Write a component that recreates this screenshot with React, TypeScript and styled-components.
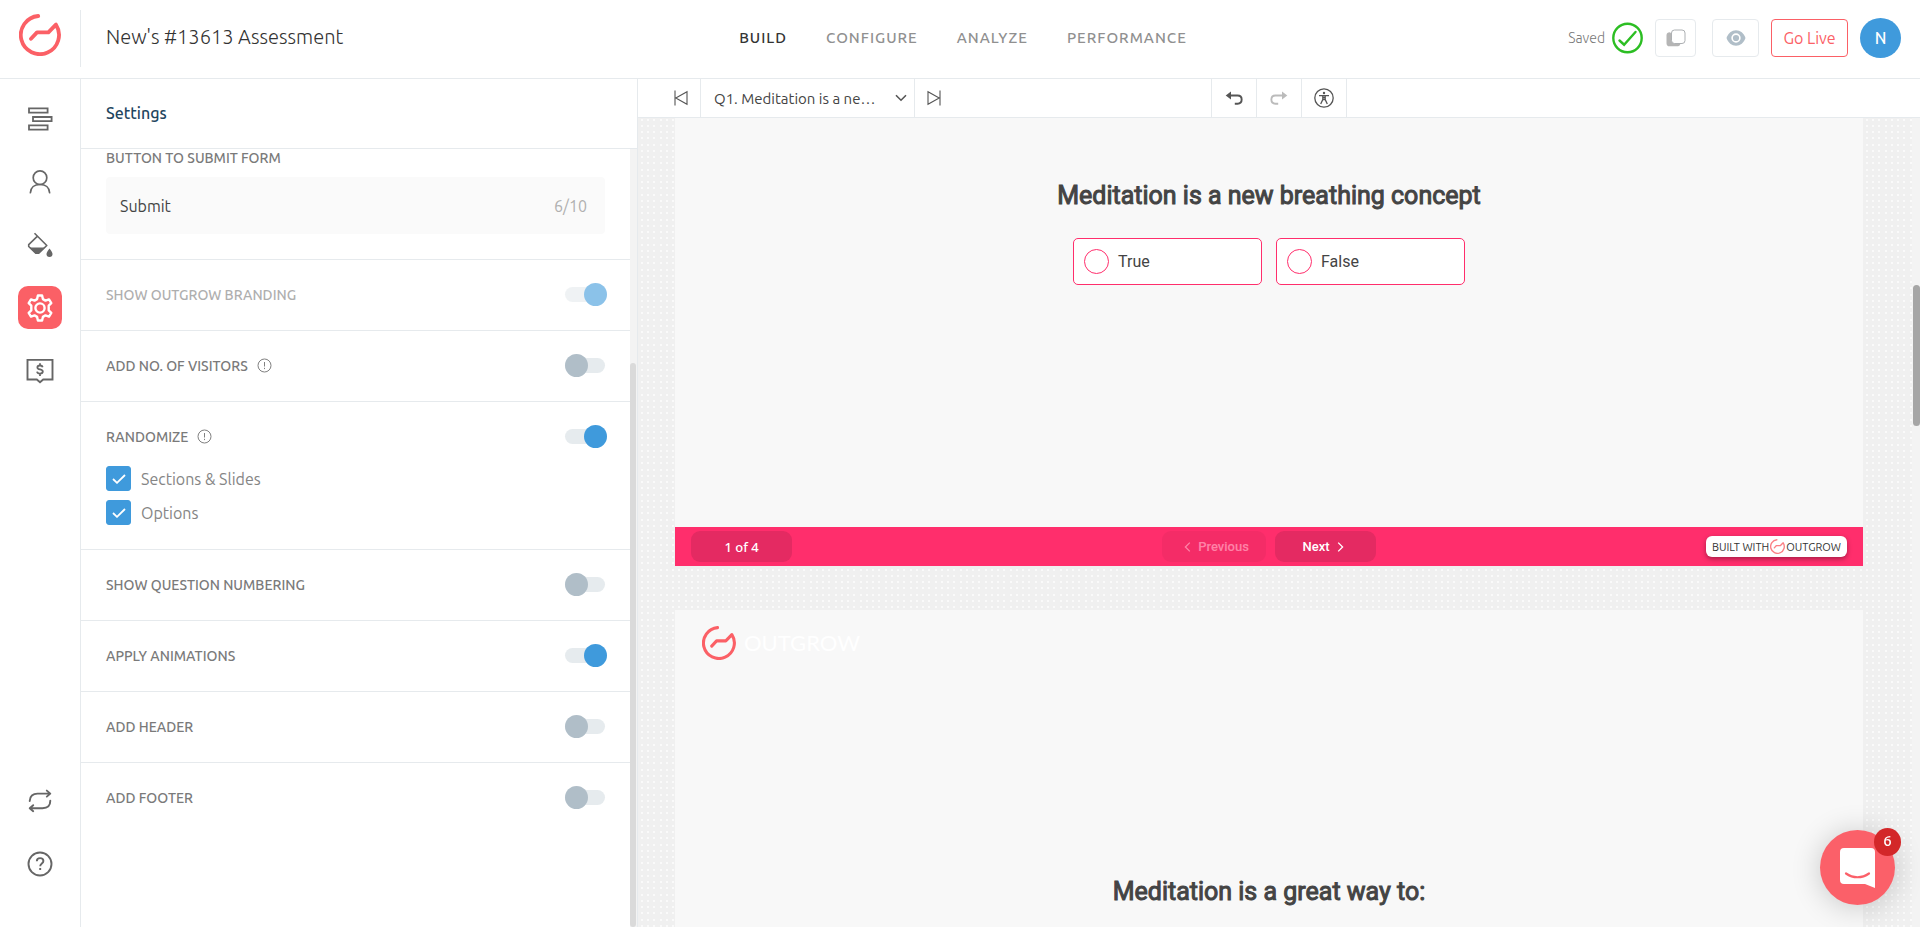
import React, { useState } from "react";
import styled, { createGlobalStyle, css } from "styled-components";

const line = "#e6eaed";
const ink = "#666666";
const blue = "#3f9adc";
const coral = "#fb6066";
const pink = "#ff2e6c";
const uiFont = '"Ubuntu", "Open Sans", "Noto Sans", sans-serif';
const quizFont = '"Roboto", sans-serif';

const dotTile = `<svg xmlns='http://www.w3.org/2000/svg' width='25' height='25'>${[4, 10, 16, 23]
  .map((x) => [2, 8, 14, 20].map((y) => `<circle cx='${x}' cy='${y}' r='0.9' fill='white'/>`).join(""))
  .join("")}</svg>`;

const GlobalStyle = createGlobalStyle`
  * { box-sizing: border-box; }
  body { margin: 0; font-family: ${uiFont}; color: #444; background: #fff; overflow: hidden; }
  button, input, select { font: inherit; color: inherit; margin: 0; }
  button { cursor: pointer; padding: 0; }
  a { text-decoration: none; color: inherit; }
  h1, h2, h3 { margin: 0; }
  svg { display: block; flex: none; }
`;

const Page = styled.div`
  display: flex;
  flex-direction: column;
  height: 100vh;
`;

const Header = styled.header`
  display: grid;
  grid-template-columns: 1fr auto 1fr;
  flex: none;
  height: 79px;
  border-bottom: 1px solid ${line};
`;

const Brand = styled.div`
  display: flex;
  align-items: center;
  padding-bottom: 2px;
`;

const LogoLink = styled.a`
  display: flex;
  justify-content: center;
  width: 80px;
  padding-bottom: 6px;
`;

const Title = styled.h1`
  display: flex;
  align-items: center;
  height: 57px;
  padding: 0 0 2px 25px;
  border-left: 1px solid ${line};
  font-size: 20px;
  font-weight: 300;
  line-height: 24px;
  color: #333;
`;

const Nav = styled.nav`
  display: flex;
  align-items: center;
  gap: 39px;
  padding: 0 0 2px 6px;
`;

const NavLink = styled.a<{ $active?: boolean }>`
  font-size: 15px;
  font-weight: 500;
  line-height: 20px;
  letter-spacing: 1px;
  color: ${(p) => (p.$active ? "#333" : "#909090")};
`;

const Actions = styled.div`
  display: flex;
  align-items: center;
  justify-content: flex-end;
  gap: 12px;
  padding: 0 19px 2px 0;
`;

const Saved = styled.span`
  display: flex;
  align-items: center;
  gap: 7px;
  font-size: 14px;
  font-weight: 300;
  color: #777;
`;

const HeaderButton = styled.button<{ $width: number; $accent?: boolean }>`
  display: flex;
  align-items: center;
  justify-content: center;
  width: ${(p) => p.$width}px;
  height: 38px;
  border: 1px solid ${(p) => (p.$accent ? coral : line)};
  border-radius: 4px;
  background: #fff;
  color: ${coral};
  font-size: 16px;
`;

const PreviewGroup = styled.div`
  display: flex;
  padding-left: 4px;
`;

const Avatar = styled.button`
  width: 41px;
  height: 40px;
  border: 0;
  border-radius: 50%;
  background: ${blue};
  color: #fff;
  font-size: 16px;
  font-weight: 500;
`;

const Body = styled.div`
  display: flex;
  flex: 1;
  min-height: 0;
`;

const Rail = styled.nav`
  display: flex;
  flex-direction: column;
  flex: none;
  align-items: center;
  gap: 20px;
  width: 81px;
  padding: 18px 0 42px;
  border-right: 1px solid ${line};
`;

const RailButton = styled.button<{ $active?: boolean }>`
  display: flex;
  align-items: center;
  justify-content: center;
  width: 44px;
  height: 43px;
  border: 0;
  border-radius: 10px;
  background: ${(p) => (p.$active ? coral : "transparent")};
  color: ${(p) => (p.$active ? "#fff" : ink)};
`;

const RailSpacer = styled.div`
  flex: 1;
`;

const Panel = styled.section`
  display: flex;
  flex-direction: column;
  flex: none;
  width: 556px;
`;

const PanelTitle = styled.h2`
  flex: none;
  height: 70px;
  padding: 22px 25px;
  border-bottom: 1px solid ${line};
  font-size: 16px;
  font-weight: 500;
  line-height: 24px;
  color: #1f4660;
`;

const PanelBody = styled.div`
  display: flex;
  flex: 1;
  min-height: 0;
  overflow: hidden;
`;

const PanelRows = styled.div`
  flex: 1;
`;

const ScrollTrack = styled.div<{ $wide?: boolean }>`
  flex: none;
  width: ${(p) => (p.$wide ? 8 : 7)}px;
  padding-left: ${(p) => (p.$wide ? 1 : 0)}px;
  padding-right: ${(p) => (p.$wide ? 0 : 1)}px;
  background: #f3f3f3;
`;

const ScrollThumb = styled.div<{ $top: number; $height: number; $color: string }>`
  position: relative;
  top: ${(p) => p.$top}%;
  height: ${(p) => p.$height}%;
  border-radius: 4px;
  background: ${(p) => p.$color};
`;

const Row = styled.div`
  padding: 23px 23px 24px 25px;
  border-bottom: 1px solid ${line};
  &:first-child { padding-top: 0; padding-bottom: 25px; }
  &:last-child { border-bottom: 0; }
`;

const RowHead = styled.div<{ $muted?: boolean }>`
  display: flex;
  align-items: center;
  gap: 9px;
  height: 23px;
  opacity: ${(p) => (p.$muted ? 0.6 : 1)};
  color: #808080;
`;

const rowText = css`
  font-size: 14px;
  font-weight: 500;
  line-height: 18px;
  color: #7a7a7a;
`;

const RowLabel = styled.label`
  ${rowText}
`;

const FieldLabel = styled.label`
  ${rowText}
  display: block;
`;

const Switch = styled.input`
  position: relative;
  appearance: none;
  width: 42px;
  height: 23px;
  margin-left: auto;
  cursor: pointer;
  &::before {
    content: "";
    position: absolute;
    left: 0;
    top: 4px;
    width: 40px;
    height: 15px;
    border-radius: 8px;
    background: #e6ebee;
  }
  &::after {
    content: "";
    position: absolute;
    left: 0;
    top: 0;
    width: 23px;
    height: 23px;
    border-radius: 50%;
    background: #b0bec8;
  }
  &:checked::after { left: 19px; background: ${blue}; }
`;

const Field = styled.div`
  display: flex;
  align-items: center;
  height: 57px;
  margin: 10px 2px 0 0;
  padding: 0 18px 0 14px;
  border-radius: 4px;
  background: #fafafa;
`;

const FieldInput = styled.input`
  flex: 1;
  min-width: 0;
  padding: 0;
  border: 0;
  outline: 0;
  background: transparent;
  font-size: 16px;
  color: #444;
`;

const Counter = styled.span`
  font-size: 16px;
  color: #b0b0b0;
`;

const Checks = styled.div`
  display: grid;
  gap: 9px;
  padding: 18px 0 0;
`;

const CheckLabel = styled.label`
  display: flex;
  align-items: center;
  gap: 10px;
  height: 25px;
  font-size: 16px;
  color: #858585;
`;

const CheckWrap = styled.span`
  display: grid;
  place-items: center;
  width: 25px;
  height: 25px;
  > * { grid-area: 1 / 1; }
  svg { pointer-events: none; }
`;

const Checkbox = styled.input`
  appearance: none;
  width: 25px;
  height: 25px;
  border: 1px solid ${blue};
  border-radius: 3px;
  background: #fff;
  &:checked { background: ${blue}; }
`;

const Workspace = styled.main`
  display: flex;
  flex-direction: column;
  flex: 1;
  min-width: 0;
  border-left: 1px solid ${line};
`;

const Toolbar = styled.div`
  display: flex;
  flex: none;
  justify-content: space-between;
  height: 39px;
  border-bottom: 1px solid ${line};
`;

const ToolGroup = styled.div`
  display: flex;
  &:first-child { padding-left: 24px; }
  &:last-child { margin-right: calc(45% - 4px); }
`;

const ToolButton = styled.button<{ $ruled?: boolean; $width: number }>`
  display: flex;
  align-items: center;
  justify-content: center;
  width: ${(p) => p.$width}px;
  border: 0;
  border-left: ${(p) => (p.$ruled ? `1px solid ${line}` : "0")};
  background: #fff;
  color: #555;
  &:disabled { color: #bbb; }
  ${ToolGroup}:last-child &:last-child { border-right: 1px solid ${line}; }
`;

const Picker = styled.div`
  display: grid;
  align-items: center;
  width: 215px;
  border: 1px solid ${line};
  border-width: 0 1px;
  > * { grid-area: 1 / 1; }
  svg { justify-self: end; margin-right: 7px; pointer-events: none; }
`;

const PickerSelect = styled.select`
  appearance: none;
  width: 100%;
  height: 38px;
  padding: 0 30px 0 13px;
  border: 0;
  outline: 0;
  background: #fff;
  font-size: 15px;
`;

const CanvasArea = styled.div`
  display: flex;
  flex: 1;
  min-height: 0;
`;

const Canvas = styled.div`
  display: flex;
  flex-direction: column;
  gap: 44px;
  flex: 1;
  min-width: 0;
  padding: 0 49px 0 37px;
  overflow: hidden;
  background: #f0f0f0 url("data:image/svg+xml,${encodeURIComponent(dotTile).replace(/'/g, "%27")}");
`;

const Slide = styled.article`
  display: flex;
  flex-direction: column;
  flex: none;
  background: #f8f8f8;
`;

const Question = styled.h3<{ $top: number }>`
  padding-top: ${(p) => p.$top}px;
  font-family: ${quizFont};
  font-size: 25px;
  font-weight: 400;
  -webkit-text-stroke: 1px #444;
  line-height: 32px;
  text-align: center;
  color: #444;
`;

const Options = styled.div`
  display: flex;
  justify-content: center;
  gap: 14px;
  padding: 26px 0 242px;
`;

const Option = styled.label`
  display: flex;
  align-items: center;
  gap: 9px;
  width: 189px;
  height: 47px;
  padding: 0 10px;
  border: 1px solid ${pink};
  border-radius: 5px;
  background: #fff;
  font-family: ${quizFont};
  font-size: 16px;
  color: #444;
`;

const Radio = styled.input`
  appearance: none;
  width: 25px;
  height: 25px;
  border: 1px solid ${pink};
  border-radius: 50%;
  background: #fff;
  &:checked { background: ${pink}; }
`;

const SlideFooter = styled.footer`
  display: grid;
  grid-template-columns: 1fr auto 1fr;
  align-items: center;
  height: 39px;
  padding: 0 16px;
  background: ${pink};
`;

const chip = css`
  display: flex;
  align-items: center;
  justify-content: center;
  width: 101px;
  height: 31px;
  border: 0;
  border-radius: 9px;
  background: #e42a62;
  color: #fff;
  font-size: 13px;
`;

const Progress = styled.span`
  ${chip}
  font-family: "Noto Sans", sans-serif;
  font-weight: 500;
`;

const Steps = styled.div`
  display: flex;
  gap: 9px;
`;

const StepButton = styled.button`
  ${chip}
  gap: 7px;
  padding-right: 5px;
  font-family: ${quizFont};
  font-weight: 500;
  &:disabled { width: 104px; padding: 0 0 0 5px; opacity: 0.4; }
`;

const BuiltWith = styled.a`
  display: flex;
  align-items: center;
  justify-content: center;
  justify-self: end;
  gap: 1px;
  width: 141px;
  height: 21px;
  border-radius: 6px;
  background: #fff;
  box-shadow: 0 2px 5px rgba(0, 0, 0, 0.35);
  font-size: 11px;
  color: #333;
`;

const Wordmark = styled.div`
  display: flex;
  align-items: center;
  gap: 8px;
  padding: 16px 27px 0;
  font-family: "Lato", sans-serif;
  font-size: 22px;
  line-height: 34px;
  color: #fff;
`;

const Chat = styled.button`
  position: fixed;
  right: 25px;
  bottom: 22px;
  display: grid;
  place-items: center;
  width: 75px;
  height: 75px;
  border: 0;
  border-radius: 50%;
  background: #fb6069;
  box-shadow: 0 2px 30px rgba(0, 0, 0, 0.2);
`;

const ChatBadge = styled.span`
  position: absolute;
  top: -2px;
  right: -6px;
  width: 27px;
  height: 28px;
  border-radius: 50%;
  background: #d32729;
  color: #fff;
  font-size: 15px;
  font-weight: 500;
  line-height: 26px;
`;

const Logo = ({ size, faded }: { size: number; faded?: boolean }) => (
  <svg width={size} height={size} viewBox="0 0 42 42" fill="none" stroke={coral} strokeWidth="3.8"
    strokeLinecap="round" strokeLinejoin="round" opacity={faded ? 0.8 : 1} aria-hidden="true">
    <path d="M19.2 2A19.1 19.1 0 1 0 36.9 10.6L29.4 18.4H18L12 24.8" />
  </svg>
);

const LayersIcon = () => (
  <svg width="26" height="26" viewBox="0 0 26 26" fill="none" stroke="currentColor" strokeWidth="1.8" aria-hidden="true">
    <path d="M2 2.4h18.600v4.200H2zM6 11h18.600v4.200H6zM2 19.400h18.600v4.200H2z" />
  </svg>
);

const PersonIcon = () => (
  <svg width="24" height="26" viewBox="0 0 24 26" fill="none" stroke="currentColor" strokeWidth="1.700" strokeLinecap="round" aria-hidden="true">
    <circle cx="12" cy="8.700" r="6.800" />
    <path d="M2.400 23.700c.3-5 4-8.200 9.600-8.200s9.300 3.200 9.600 8.200" />
  </svg>
);

const PaintIcon = () => (
  <svg width="28" height="28" viewBox="0 0 28 28" aria-hidden="true">
    <path d="M8.500 2.300 20.800 14.500 12.500 22.300 10 22.300 2.700 15.500V13.600L11 5.600" fill="none" stroke="currentColor" strokeWidth="1.600" strokeLinejoin="round" />
    <path d="M3.200 16.400H19L12.500 22.800H10z" fill="currentColor" />
    <path d="M23.500 17.500c2 2.700 3 4.100 3 5.500a3 3 0 0 1-6 0c0-1.400 1-2.800 3-5.500z" fill="currentColor" />
  </svg>
);

const GearIcon = () => (
  <svg width="28" height="28" viewBox="0 0 28 28" fill="none" stroke="currentColor" strokeWidth="2.400" strokeLinejoin="round" aria-hidden="true">
    <path d="M11.900 1.500h4.200l.8 3.600 2.600 1.500 3.500-1.200 2.300 3.800-2.600 2.500v4.600l2.600 2.500-2.300 3.800-3.500-1.200-2.600 1.500-.8 3.600h-4.200l-.8-3.600-2.600-1.500L5 22.600l-2.300-3.800 2.600-2.500v-4.600L2.700 9.200 5 5.400l3.500 1.200 2.600-1.500z" />
    <circle cx="14" cy="14" r="4.600" />
  </svg>
);

const LeadIcon = () => (
  <svg width="28" height="26" viewBox="0 0 28 26" fill="none" stroke="currentColor" aria-hidden="true">
    <path d="M1.500 1.900h25v19.600h-9.300L14 24.300l-3.200-2.800H1.500z" strokeWidth="1.900" />
    <path d="M16.700 9.200c-.3-1.300-1.300-1.700-2.700-1.700-1.600 0-2.600.7-2.600 1.900 0 2.800 5.400 1.300 5.400 4.200 0 1.300-1.100 2-2.800 2s-2.700-.7-2.900-2M14 5.200v2.200M14 15.700v2.200" strokeWidth="1.800" />
  </svg>
);

const LoopIcon = () => (
  <svg width="24" height="26" viewBox="0 0 24 26" fill="none" stroke="currentColor" strokeWidth="1.900" strokeLinecap="round" strokeLinejoin="round" aria-hidden="true">
    <path d="M1.700 13C1.700 8 5 5.600 9.500 5.600H22M18.800 2.600l3.500 3-3.500 3M22.300 12.800c0 5-3.300 7.400-7.800 7.400H2M5.200 17.200l-3.500 3 3.500 3" />
  </svg>
);

const HelpIcon = () => (
  <svg width="26" height="26" viewBox="0 0 26 26" fill="none" stroke="currentColor" strokeWidth="1.900" aria-hidden="true">
    <circle cx="13" cy="13" r="11.500" />
    <path d="M9.800 10.300c0-2 1.300-3.200 3.300-3.200s3.300 1.200 3.300 2.900c0 2.500-3.200 2.500-3.200 5.200M13.200 17v2" />
  </svg>
);

const InfoIcon = () => (
  <svg width="15" height="15" viewBox="0 0 15 15" fill="none" stroke="currentColor" aria-hidden="true">
    <circle cx="7.500" cy="7.500" r="6.500" />
    <path d="M7.500 4v4.500M7.500 9.800v1.300" />
  </svg>
);

const SavedIcon = () => (
  <svg width="31" height="32" viewBox="0 0 31 32" fill="none" stroke="#2cbe23" strokeWidth="2.400" aria-hidden="true">
    <circle cx="15.500" cy="16" r="14.200" />
    <path d="M7.500 18.500l4.600 4.200L23.500 10" strokeLinecap="round" />
  </svg>
);

const CopyIcon = () => (
  <svg width="20" height="18" viewBox="0 0 20 18" aria-hidden="true">
    <path d="M4 3.200C1.600 3.200.5 4 .5 6.500v7.700c0 2 1 3.100 3 3.100h7c2.500 0 3.600-.8 3.800-2.600z" fill="#b5b5b5" />
    <rect x="5.500" y="1" width="13.500" height="13.500" rx="3" fill="#fff" stroke="#adb0b3" />
  </svg>
);

const EyeIcon = () => (
  <svg width="20" height="16" viewBox="0 0 20 16" aria-hidden="true">
    <path d="M.5 8C2.200 3.200 5.700.3 10 .3S17.800 3.200 19.500 8c-1.700 4.800-5.200 7.700-9.500 7.700S2.200 12.800.5 8z" fill="#b0bec8" />
    <circle cx="10" cy="8" r="3.900" fill="#b0bec8" stroke="#fff" strokeWidth="1.600" />
  </svg>
);

const StepIcon = ({ back }: { back?: boolean }) => (
  <svg width="14" height="16" viewBox="0 0 14 16" fill="none" stroke="currentColor" strokeWidth="1.100" aria-hidden="true">
    {back ? <path d="M1 .5v15M13 1.700v12.600L1.800 8z" /> : <path d="M13 .5v15M1 1.700v12.600L12.200 8z" />}
  </svg>
);

const TurnIcon = ({ forward }: { forward?: boolean }) => (
  <svg width="18" height="14" viewBox="0 0 18 14" aria-hidden="true">
    <g transform={forward ? "matrix(-1 0 0 1 18 0)" : undefined}>
      <path d="M5 4.500h7.600c5.400 0 5.400 8.200 0 8.200H9.800" fill="none" stroke="currentColor" strokeWidth="1.900" />
      <path d="M.7 4.500 6 .5v8z" fill="currentColor" />
    </g>
  </svg>
);

const AccessIcon = () => (
  <svg width="20" height="20" viewBox="0 0 20 20" fill="none" stroke="currentColor" strokeWidth="1.300" aria-hidden="true">
    <circle cx="10" cy="10" r="9.200" />
    <circle cx="10" cy="5" r="1.200" fill="currentColor" stroke="none" />
    <path d="M5 7.600h10M8.800 7.600v3.900L6.700 16M11.200 7.600v3.900l2.100 4.500M8.800 9.500h2.400M8.800 11.500h2.400" />
  </svg>
);

const Chevron = ({ kind }: { kind: "down" | "left" | "right" }) =>
  kind === "down" ? (
    <svg width="12" height="8" viewBox="0 0 12 8" fill="none" stroke="#555" strokeWidth="1.600" aria-hidden="true">
      <path d="M1 1.200l5 5 5-5" />
    </svg>
  ) : (
    <svg width="7" height="10" viewBox="0 0 7 10" fill="none" stroke="currentColor" strokeWidth="1.300" aria-hidden="true">
      <path d={kind === "left" ? "M5.800.6 1.400 5l4.400 4.400" : "M1.200.6 5.600 5 1.200 9.400"} />
    </svg>
  );

const TickIcon = () => (
  <svg width="14" height="10" viewBox="0 0 14 10" fill="none" stroke="#fff" strokeWidth="1.800" aria-hidden="true">
    <path d="M1 5l4 3.800L13 1" />
  </svg>
);

const ChatIcon = () => (
  <svg width="35" height="40" viewBox="0 0 35 40" aria-hidden="true">
    <path d="M4 0h27a4 4 0 0 1 4 4v36l-10-4H4a4 4 0 0 1-4-4V4a4 4 0 0 1 4-4z" fill="#fff" />
    <path d="M6 25.500c7 5 16 5 23 0" fill="none" stroke="#fb6069" strokeWidth="2.200" strokeLinecap="round" />
  </svg>
);

type SettingProps = {
  id: string;
  label: string;
  on?: boolean;
  info?: boolean;
  muted?: boolean;
  children?: React.ReactNode;
};

const Setting = ({ id, label, on, info, muted, children }: SettingProps) => (
  <Row>
    <RowHead $muted={muted}>
      <RowLabel htmlFor={id}>{label}</RowLabel>
      {info && <InfoIcon />}
      <Switch id={id} type="checkbox" role="switch" defaultChecked={on} />
    </RowHead>
    {children}
  </Row>
);

const Check = ({ label }: { label: string }) => (
  <CheckLabel>
    <CheckWrap>
      <Checkbox type="checkbox" defaultChecked />
      <TickIcon />
    </CheckWrap>
    {label}
  </CheckLabel>
);

export default function App() {
  const [submitText, setSubmitText] = useState("Submit");

  return (
    <Page>
      <GlobalStyle />
      <Header>
        <Brand>
          <LogoLink href="#" aria-label="Outgrow"><Logo size={42} /></LogoLink>
          <Title>New's #13613 Assessment</Title>
        </Brand>
        <Nav>
          <NavLink href="#build" $active>BUILD</NavLink>
          <NavLink href="#configure">CONFIGURE</NavLink>
          <NavLink href="#analyze">ANALYZE</NavLink>
          <NavLink href="#performance">PERFORMANCE</NavLink>
        </Nav>
        <Actions>
          <Saved>Saved <SavedIcon /></Saved>
          <HeaderButton $width={41} aria-label="Duplicate"><CopyIcon /></HeaderButton>
          <PreviewGroup>
            <HeaderButton $width={47} aria-label="Preview"><EyeIcon /></HeaderButton>
          </PreviewGroup>
          <HeaderButton $width={77} $accent>Go Live</HeaderButton>
          <Avatar>N</Avatar>
        </Actions>
      </Header>

      <Body>
        <Rail>
          <RailButton aria-label="Content"><LayersIcon /></RailButton>
          <RailButton aria-label="Leads"><PersonIcon /></RailButton>
          <RailButton aria-label="Design"><PaintIcon /></RailButton>
          <RailButton aria-label="Settings" $active><GearIcon /></RailButton>
          <RailButton aria-label="Payments"><LeadIcon /></RailButton>
          <RailSpacer />
          <RailButton aria-label="Switch"><LoopIcon /></RailButton>
          <RailButton aria-label="Help"><HelpIcon /></RailButton>
        </Rail>

        <Panel>
          <PanelTitle>Settings</PanelTitle>
          <PanelBody>
            <PanelRows>
              <Row>
                <FieldLabel htmlFor="submit-text">BUTTON TO SUBMIT FORM</FieldLabel>
                <Field>
                  <FieldInput
                    id="submit-text"
                    maxLength={10}
                    value={submitText}
                    onChange={(e) => setSubmitText(e.target.value)}
                  />
                  <Counter>{submitText.length}/10</Counter>
                </Field>
              </Row>
              <Setting id="branding" label="SHOW OUTGROW BRANDING" on muted />
              <Setting id="visitors" label="ADD NO. OF VISITORS" info />
              <Setting id="randomize" label="RANDOMIZE" info on>
                <Checks>
                  <Check label="Sections &amp; Slides" />
                  <Check label="Options" />
                </Checks>
              </Setting>
              <Setting id="numbering" label="SHOW QUESTION NUMBERING" />
              <Setting id="animations" label="APPLY ANIMATIONS" on />
              <Setting id="header" label="ADD HEADER" />
              <Setting id="footer" label="ADD FOOTER" />
            </PanelRows>
            <ScrollTrack>
              <ScrollThumb $top={27.5} $height={72.5} $color="#dadada" />
            </ScrollTrack>
          </PanelBody>
        </Panel>

        <Workspace>
          <Toolbar>
            <ToolGroup>
              <ToolButton $width={38} aria-label="First question"><StepIcon back /></ToolButton>
              <Picker>
                <PickerSelect aria-label="Question">
                  <option>Q1. Meditation is a ne…</option>
                </PickerSelect>
                <Chevron kind="down" />
              </Picker>
              <ToolButton $width={38} aria-label="Last question"><StepIcon /></ToolButton>
            </ToolGroup>
            <ToolGroup>
              <ToolButton $ruled $width={45} aria-label="Undo"><TurnIcon /></ToolButton>
              <ToolButton $ruled $width={45} aria-label="Redo" disabled><TurnIcon forward /></ToolButton>
              <ToolButton $ruled $width={46} aria-label="Accessibility"><AccessIcon /></ToolButton>
            </ToolGroup>
          </Toolbar>
          <CanvasArea>
            <Canvas>
              <Slide>
                <Question $top={62}>Meditation is a new breathing concept</Question>
                <Options>
                  <Option><Radio type="radio" name="q1" />True</Option>
                  <Option><Radio type="radio" name="q1" />False</Option>
                </Options>
                <SlideFooter>
                  <Progress>1 of 4</Progress>
                  <Steps>
                    <StepButton disabled><Chevron kind="left" />Previous</StepButton>
                    <StepButton>Next<Chevron kind="right" /></StepButton>
                  </Steps>
                  <BuiltWith href="#outgrow">BUILT WITH <Logo size={15} faded /> OUTGROW</BuiltWith>
                </SlideFooter>
              </Slide>
              <Slide>
                <Wordmark><Logo size={34} />OUTGROW</Wordmark>
                <Question $top={216}>Meditation is a great way to:</Question>
                <Options />
              </Slide>
            </Canvas>
            <ScrollTrack $wide>
              <ScrollThumb $top={20.6} $height={17.5} $color="#a6a6a6" />
            </ScrollTrack>
          </CanvasArea>
        </Workspace>
      </Body>

      <Chat aria-label="Open chat">
        <ChatIcon />
        <ChatBadge>6</ChatBadge>
      </Chat>
    </Page>
  );
}
